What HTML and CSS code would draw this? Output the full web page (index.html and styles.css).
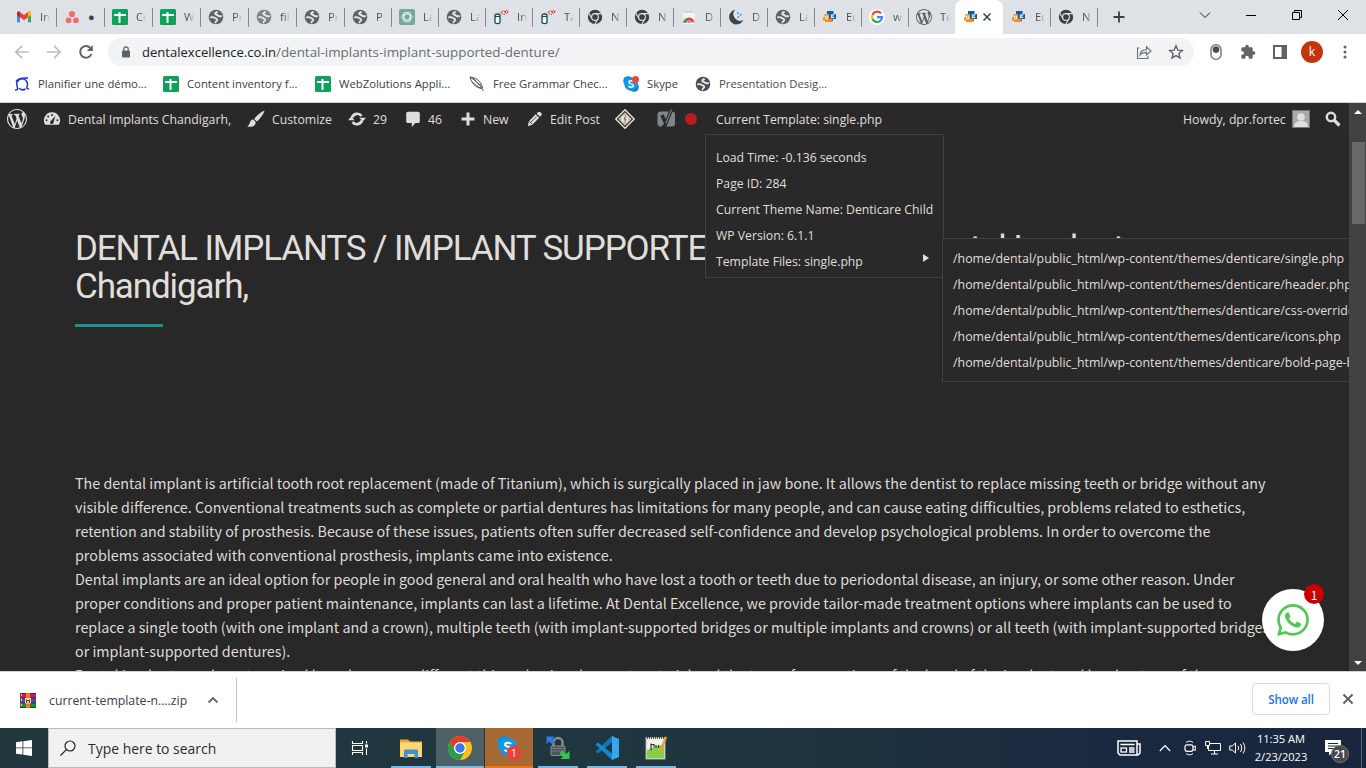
FILE: index.html
```html
<!DOCTYPE html>
<html lang="en">
<head>
<meta charset="utf-8">
<title>Dental Implants / Implant Supported Denture</title>
<link rel="stylesheet" href="styles.css">
</head>
<body>
<svg class="defs" width="0" height="0">
  <symbol id="globe" viewBox="0 0 16 16"><circle cx="8" cy="8" r="7.300" fill="currentColor"/><path d="M2.200 8.300c1.800-.3 3.600-.3 4.700.7 1 .8 2.400.6 2.400 1.900 0 1.200-1.700 1-1.800 2.400v1" fill="none" stroke="#e6e8eb" stroke-width="1.700"/><path d="M9.500 2.400c-.6 1-2.300.9-2.300 2.100 0 1.300 1.500 1 2.300 1.700.8.800 1.300 1.400 2.400 1.100.9-.2 1.500-.2 2 .2" fill="none" stroke="#e6e8eb" stroke-width="2"/></symbol>
  <symbol id="gmail" viewBox="0 0 16 16"><path d="M1 4.500v8.800h3V7.800z" fill="#4285f4"/><path d="M15 4.500v8.800h-3V7.800z" fill="#34a853"/><path d="M1 4.200C1 2.600 2.800 2 4 2.900l4 3 4-3c1.200-.9 3-.3 3 1.300L15 6l-7 5.200L1 6z" fill="#ea4335"/><path d="M12 2.900c1.200-.9 3-.3 3 1.300V6l-3 2.200z" fill="#fbbc04"/><path d="M1 4.200C1 2.900 2.500 2 4 2.900v5.300L1 6z" fill="#c5221f"/></symbol>
  <symbol id="asana" viewBox="0 0 16 16"><g fill="#f8696b"><circle cx="8" cy="5" r="3.100"/><circle cx="4.600" cy="11.300" r="2.900"/><circle cx="11.900" cy="11.300" r="2.900"/></g></symbol>
  <symbol id="sheet" viewBox="0 0 16 16"><rect width="16" height="16" rx="1.500" fill="#11a05b"/><path d="M2 6h12M7.500 3v11" stroke="#fff" stroke-width="2"/></symbol>
  <symbol id="gpt" viewBox="0 0 16 16"><rect width="16" height="16" rx="2" fill="#74a99a"/><g fill="none" stroke="#e5f2ee" stroke-width=".9"><ellipse cx="8" cy="8" rx="5.300" ry="3"/><ellipse cx="8" cy="8" rx="5.300" ry="3" transform="rotate(60 8 8)"/><ellipse cx="8" cy="8" rx="5.300" ry="3" transform="rotate(120 8 8)"/></g></symbol>
  <symbol id="db" viewBox="0 0 16 16"><path d="M2 6.500c0-1 1-1.500 2.500-1.500S7 5.500 7 6.500v6.800c0 .8-1 1.300-2.500 1.300S2 14.100 2 13.300z" fill="#fff" stroke="#114a5e" stroke-width="1.300"/><path d="M2 7.500h5" stroke="#114a5e" stroke-width="1.200"/><path d="M10 1.500 8 3.500l2 2M10.800 2.300h1.700v1.500h-1M11.500 5v.8M13.300 1.300l2 1.400-2 1.700" fill="none" stroke="#e02424" stroke-width="1"/></symbol>
  <symbol id="chromegray" viewBox="0 0 16 16"><circle cx="8" cy="8" r="7.200" fill="#3c4043"/><circle cx="8" cy="8" r="3.400" fill="none" stroke="#dee1e6" stroke-width="1.100"/><path d="M8 4.600h6.500M5 9.700 1.900 4.300M11 9.700l-3.200 5.500" stroke="#dee1e6" stroke-width="1.100"/></symbol>
  <symbol id="store" viewBox="0 0 16 16"><path d="M2 4h12v11H2z" fill="#f1f3f4"/><path d="M5.500 4V2.500h5V4" fill="none" stroke="#c4c7ca"/><path d="M2.500 14a5.500 5.500 0 0 1 11 0z" fill="#ea4335"/><path d="M2.500 12 4 9.800 7 14H2.500z" fill="#34a853"/><path d="M13.500 11.500V14H9z" fill="#fbbc04"/><path d="M5.700 14a2.300 2.300 0 0 1 4.600 0z" fill="#4285f4" stroke="#fff" stroke-width=".6"/></symbol>
  <symbol id="moon" viewBox="0 0 16 16"><path d="M7 .8a7.400 7.400 0 1 0 8.300 10.200A6.700 6.700 0 0 1 7 .8z" fill="#3f4448"/><g fill="#2da1f0"><circle cx="9.800" cy="4" r="1"/><circle cx="12.700" cy="5.800" r="1"/><circle cx="10.300" cy="8" r="1"/></g></symbol>
  <symbol id="de" viewBox="0 0 16 16"><path d="M5 2h6.500v3H14v5h-3v2H7V6H5z" fill="#0c5ea8"/><path d="M2.500 5H7v4.500h3.500V13H3v-1.500H1V8.500h1.500z" fill="#f58a1f"/><path d="M3.700 7h2v3h-2zM12.500 5.800H9.300v2.700h3M9.300 7h2.500" stroke="#fff" fill="none" stroke-width=".9"/></symbol>
  <symbol id="google" viewBox="0 0 16 16"><circle cx="8" cy="8" r="8" fill="#fff"/><g fill="none" stroke-width="2.200"><path d="M12 4.400A5 5 0 0 0 3.500 6" stroke="#ea4335"/><path d="M3.600 5.700a5 5 0 0 0 0 4.600" stroke="#fbbc05"/><path d="M3.500 10a5 5 0 0 0 7.800 1.800" stroke="#34a853"/><path d="M8 8.200h5a5 5 0 0 1-1.900 3.800" stroke="#4285f4"/></g></symbol>
  <symbol id="wp" viewBox="0 0 20 20"><path d="M20 10c0-5.510-4.490-10-10-10C4.480 0 0 4.490 0 10c0 5.520 4.480 10 10 10 5.510 0 10-4.480 10-10zM7.780 15.370L4.370 6.220c.55-.02 1.170-.08 1.170-.08.5-.06.44-1.130-.06-1.110 0 0-1.450.11-2.370.11-.18 0-.37 0-.58-.01C4.120 2.690 6.870 1.110 10 1.110c2.330 0 4.450.87 6.050 2.340-.68-.11-1.650.39-1.650 1.580 0 .74.45 1.360.9 2.100.35.61.55 1.360.55 2.460 0 1.490-1.400 5-1.400 5l-3.030-8.370c.54-.02.82-.17.82-.17.5-.05.44-1.250-.06-1.220 0 0-1.440.12-2.380.12-.87 0-2.330-.12-2.330-.12-.5-.03-.56 1.200-.06 1.220l.92.08 1.260 3.410zM17.410 10c.24-.64.74-1.870.43-4.250.7 1.290 1.050 2.710 1.050 4.250 0 3.290-1.730 6.240-4.400 7.780.97-2.590 1.940-5.200 2.920-7.780zM6.100 18.090C3.120 16.650 1.110 13.530 1.110 10c0-1.300.23-2.480.72-3.590C3.250 10.300 4.670 14.200 6.100 18.090zm4.030-6.630l2.580 6.980c-.86.29-1.760.45-2.710.45-.79 0-1.570-.11-2.290-.33.81-2.380 1.620-4.740 2.420-7.100z" fill="currentColor"/></symbol>
  <symbol id="skype" viewBox="0 0 16 16"><circle cx="5" cy="5" r="4.800" fill="#0a8fdc"/><circle cx="11" cy="11" r="4.800" fill="#0a7fd4"/><circle cx="8" cy="8" r="6.700" fill="#129ae2"/><path d="M10.300 5.800C9.500 4.500 5.900 4.400 5.900 6.300c0 2 4.500 1.200 4.500 3.300 0 2-3.800 2-4.800.4" fill="none" stroke="#fff" stroke-width="1.500"/></symbol>
</svg>

<header class="tabs">
  <div class="tab"><svg><use href="#gmail"/></svg><span>In</span></div>
  <div class="tab asana"><svg><use href="#asana"/></svg><span>●</span></div>
  <div class="tab"><svg><use href="#sheet"/></svg><span>Co</span></div>
  <div class="tab"><svg><use href="#sheet"/></svg><span>W</span></div>
  <div class="tab"><svg><use href="#globe"/></svg><span>Pr</span></div>
  <div class="tab faded"><svg><use href="#globe"/></svg><span>file</span></div>
  <div class="tab"><svg><use href="#globe"/></svg><span>Pr</span></div>
  <div class="tab n"><svg><use href="#globe"/></svg><span>P</span></div>
  <div class="tab n"><svg><use href="#gpt"/></svg><span>La</span></div>
  <div class="tab n"><svg><use href="#globe"/></svg><span>La</span></div>
  <div class="tab n"><svg><use href="#db"/></svg><span>In</span></div>
  <div class="tab n"><svg><use href="#db"/></svg><span>Ta</span></div>
  <div class="tab n"><svg><use href="#chromegray"/></svg><span>N</span></div>
  <div class="tab n"><svg><use href="#chromegray"/></svg><span>N</span></div>
  <div class="tab n"><svg><use href="#store"/></svg><span>D</span></div>
  <div class="tab n"><svg><use href="#moon"/></svg><span>D</span></div>
  <div class="tab n"><svg><use href="#globe"/></svg><span>La</span></div>
  <div class="tab n"><svg><use href="#de"/></svg><span>Ec</span></div>
  <div class="tab n"><svg><use href="#google"/></svg><span>w</span></div>
  <div class="tab n last"><svg><use href="#wp"/></svg><span>Te</span></div>
  <div class="tab active"><svg><use href="#de"/></svg><svg class="close" viewBox="0 0 10 10"><path d="M1.500 1.500l7 7M8.500 1.500l-7 7" stroke="#3c4043" stroke-width="1.500"/></svg></div>
  <div class="tab n"><svg><use href="#de"/></svg><span>Ec</span></div>
  <div class="tab n"><svg><use href="#chromegray"/></svg><span>N</span></div>
  <svg class="plus" viewBox="0 0 12 12"><path d="M6 .5v11M.5 6h11" stroke="#3c4043" stroke-width="1.800"/></svg>
  <div class="wincontrols">
    <svg viewBox="0 0 12 12"><path d="M1 3.500l5 5 5-5" fill="none" stroke="#222"/></svg>
    <svg viewBox="0 0 12 12"><path d="M1 6.500h10" stroke="#000"/></svg>
    <svg viewBox="0 0 12 12"><path d="M1.500 3.500h7v7h-7zM3.500 3V1.500h7v7H9" fill="none" stroke="#000"/></svg>
    <svg viewBox="0 0 12 12"><path d="M1 1l10 10M11 1L1 11" stroke="#000"/></svg>
  </div>
</header>

<nav class="toolbar">
  <div class="navbtns">
    <svg viewBox="0 0 16 16"><path d="M15 8H2M8 1.800 1.800 8 8 14.200" fill="none" stroke="#bcbec1" stroke-width="1.700"/></svg>
    <svg viewBox="0 0 16 16"><path d="M1 8h13M8 1.800 14.200 8 8 14.200" fill="none" stroke="#bcbec1" stroke-width="1.700"/></svg>
    <svg viewBox="0 0 16 16"><path d="M13.400 10A5.800 5.800 0 1 1 12.300 4" fill="none" stroke="#5f6368" stroke-width="2"/><path d="M14.800 1v6H8.800z" fill="#5f6368"/></svg>
  </div>
  <div class="omnibox">
    <svg class="lock" viewBox="0 0 10 12"><rect x="1" y="4.500" width="8" height="7" rx="1" fill="#5f6368"/><path d="M2.800 5V3a2.200 2.200 0 0 1 4.400 0v2" fill="none" stroke="#5f6368" stroke-width="1.200"/></svg>
    <span class="host">dentalexcellence.co.in</span><span class="path">/dental-implants-implant-supported-denture/</span>
    <svg class="share" viewBox="0 0 16 16"><path d="M3.500 4H1.500v10.500H12V12M4 11c.5-3.500 2.500-5.300 6.500-5.400V2.800L15 7l-4.500 4V8.400C7.500 8.400 5.600 9 4 11z" fill="none" stroke="#6d7175" stroke-width="1.100"/></svg>
    <svg class="star" viewBox="0 0 16 16"><path d="M8 1.800l1.800 4.300 4.600.4-3.500 3 1.100 4.500L8 11.600 4 14l1.100-4.500-3.500-3 4.600-.4z" fill="none" stroke="#5f6368" stroke-width="1.400"/></svg>
  </div>
  <div class="exts">
    <svg viewBox="0 0 16 16"><rect x="3" y=".6" width="10" height="14.800" rx="5" fill="#fff" stroke="#5a5e62" stroke-width="1.200"/><circle cx="8" cy="5.600" r="3.300" fill="#4a4d50"/></svg>
    <svg viewBox="0 0 24 24"><path d="M20.500 11H19V7c0-1.100-.9-2-2-2h-4V3.500a2.500 2.500 0 0 0-5 0V5H4c-1.100 0-2 .9-2 2v3.800h1.500a2.700 2.700 0 0 1 0 5.400H2V20c0 1.100.9 2 2 2h3.800v-1.500a2.700 2.700 0 0 1 5.400 0V22H17c1.100 0 2-.9 2-2v-4h1.500a2.500 2.500 0 0 0 0-5z" fill="#5f6368"/></svg>
    <svg viewBox="0 0 16 16"><path d="M1 1h14v14H1zM3 3v10h6.500V3z" fill="#5f6368" fill-rule="evenodd"/></svg>
    <span class="avatar">k</span>
    <svg viewBox="0 0 16 16"><g fill="#5f6368"><circle cx="8" cy="3" r="1.500"/><circle cx="8" cy="8" r="1.500"/><circle cx="8" cy="13" r="1.500"/></g></svg>
  </div>
</nav>

<nav class="bookmarks">
  <a><svg viewBox="0 0 16 16"><path d="M1 14c2.500.3 3-1 2.300-3A5.500 5.500 0 1 1 13 10.800c-.5 1.300 0 2.200 2 2.200M11.500 13A5.500 5.500 0 0 1 5 12.300M2 5.500c2-3 6-4 12-3.500" fill="none" stroke="#1c2be0" stroke-width="1.500"/></svg>Planifier une démo...</a>
  <a><svg><use href="#sheet"/></svg>Content inventory f...</a>
  <a><svg><use href="#sheet"/></svg>WebZolutions Appli...</a>
  <a><svg viewBox="0 0 16 16"><path d="M1 1c5 .5 11 3 12.500 11C9 13 3 9 1 1zM1 1c4 3 9 6 13.500 14M4 1.800c3 4 6 6 8.500 8M3 6c3 2 6 5 9 6.500" fill="none" stroke="#444" stroke-width=".9"/></svg>Free Grammar Chec...</a>
  <a><svg viewBox="0 0 16 16"><use href="#skype"/><circle cx="12.500" cy="3.500" r="3.500" fill="#f4433c"/></svg>Skype</a>
  <a class="dim"><svg><use href="#globe"/></svg>Presentation Desig...</a>
</nav>

<main class="viewport">
  <div class="page">
    <div class="adminbar">
      <span class="ab"><svg class="i20"><use href="#wp"/></svg></span>
      <span class="ab"><svg class="i18" viewBox="0 0 20 20"><path d="M10 2.500A9 9 0 0 0 2.600 16.500h14.800A9 9 0 0 0 10 2.500z" fill="currentColor"/><g fill="#292929"><circle cx="10" cy="5.500" r="1.100"/><circle cx="5.800" cy="7.300" r="1.100"/><circle cx="4" cy="11.300" r="1.100"/><circle cx="16" cy="11.300" r="1.100"/><path d="M13.800 6.500 11.700 13.500a1.900 1.900 0 1 1-2.700-1.500z"/></g></svg>Dental Implants Chandigarh,</span>
      <span class="ab"><svg class="i18" viewBox="0 0 20 20"><path d="M19.500.5c-4 1.500-9.500 6.500-11.500 9.500l2.800 2.800C14 10.500 18.500 4.500 19.500.5zM7 10.500c-2.300.2-3.300 1.500-3.800 3.500C2.800 16 1.700 17.300.3 18.300c3.500 1 9 .3 9.500-4.800z" fill="currentColor"/></svg>Customize</span>
      <span class="ab"><svg class="i18" viewBox="0 0 20 20"><path d="M4.500 8.300A6 6 0 0 1 15 6.600M15.500 11.700A6 6 0 0 1 5 13.400" fill="none" stroke="currentColor" stroke-width="3"/><path d="M12.500 8.500H20l-3.600 4.300zM0 11.500h7.300L3.600 7.200z" fill="currentColor"/></svg>29</span>
      <span class="ab"><svg class="i16" viewBox="0 0 20 20"><path d="M3.500 1h13c1 0 2 1 2 2v10c0 1-1 2-2 2h-3.500L8.500 20v-5h-5c-1 0-2-1-2-2V3c0-1 1-2 2-2z" fill="currentColor"/></svg>46</span>
      <span class="ab"><svg class="i16" viewBox="0 0 16 16"><path d="M8 1.500v13M1.500 8h13" stroke="currentColor" stroke-width="3"/></svg>New</span>
      <span class="ab"><svg class="i16" viewBox="0 0 20 20"><path d="M13.700 1.500c1.200-1.200 2.200-.8 3.500.5s1.800 2.400.6 3.600l-1.600 1.600-4.200-4.100zM10.900 4.200l4.300 4.300-8.500 8.600L1 19l1.400-6.200z" fill="currentColor"/><path d="M4.500 14.500 12 7M3 13l3.500 3.500" stroke="#292929" stroke-width="1"/></svg>Edit Post</span>
      <span class="ab"><svg class="i20" viewBox="0 0 20 20"><path d="M10 .8 19.200 10 10 19.200.8 10z" fill="#292929" stroke="currentColor" stroke-width="1.500"/><path d="M10 3.800 16.200 10 10 16.200 3.800 10z" fill="#c8ab83" stroke="#ded7ca"/><circle cx="10" cy="10" r="3.600" fill="#e8e6e2"/><path d="M10.800 7.200 9 10h2l-1.200 2.800" fill="none" stroke="#4c596b"/></svg></span>
      <span class="ab"><svg class="i20" viewBox="0 0 20 20"><rect x="1.500" y="2.500" width="17.500" height="15" rx="3" fill="#7f868a"/><path d="M6 6l3.500 8M15.500.5 9.800 14.500C9 17 8 18 6 18.500" fill="none" stroke="#292929" stroke-width="3.400"/><path d="M15.500.5 9.800 14.500" stroke="#8f9699" stroke-width="1"/></svg><i class="dot"></i></span>
      <span class="ab">Current Template: single.php</span>
      <span class="ab howdy">Howdy, dpr.fortec<svg class="i18" viewBox="0 0 18 18"><rect x=".5" y=".5" width="17" height="17" fill="#a9a9a9" stroke="#777"/><circle cx="9" cy="7" r="3.800" fill="#e2e0dd"/><path d="M2 17c0-5 3.500-6 7-6s7 1 7 6z" fill="#e2e0dd"/></svg></span>
      <span class="ab"><svg class="i16" viewBox="0 0 16 16"><circle cx="6" cy="6" r="4.200" fill="none" stroke="currentColor" stroke-width="2.400"/><path d="M9 9l5.500 5.500" stroke="currentColor" stroke-width="3.200"/></svg></span>
    </div>

    <h1 class="title">DENTAL IMPLANTS / IMPLANT SUPPORTED DENTURE <span class="tail">/ Dental Implants</span><br>Chandigarh,</h1>
    <div class="rule"></div>

    <div class="copy">
      <p>The dental implant is artificial tooth root replacement (made of Titanium), which is surgically placed in jaw bone. It allows the dentist to replace missing teeth or bridge without any<br>visible difference. Conventional treatments such as complete or partial dentures has limitations for many people, and can cause eating difficulties, problems related to esthetics,<br>retention and stability of prosthesis. Because of these issues, patients often suffer decreased self-confidence and develop psychological problems. In order to overcome the<br>problems associated with conventional prosthesis, implants came into existence.</p>
      <p>Dental implants are an ideal option for people in good general and oral health who have lost a tooth or teeth due to periodontal disease, an injury, or some other reason. Under<br>proper conditions and proper patient maintenance, implants can last a lifetime. At Dental Excellence, we provide tailor-made treatment options where implants can be used to<br>replace a single tooth (with one implant and a crown), multiple teeth (with implant-supported bridges or multiple implants and crowns) or all teeth (with implant-supported bridges<br>or implant-supported dentures).</p>
      <p>Dental implants can be categorized based on many different things, having the most material and the type of connections of the head of the implant and level or type of the</p>
    </div>

    <ul class="menu main">
      <li>Load Time: -0.136 seconds</li>
      <li>Page ID: 284</li>
      <li>Current Theme Name: Denticare Child</li>
      <li>WP Version: 6.1.1</li>
      <li class="more">Template Files: single.php</li>
    </ul>
    <ul class="menu flyout">
      <li>/home/dental/public_html/wp-content/themes/denticare/single.php</li>
      <li>/home/dental/public_html/wp-content/themes/denticare/header.php</li>
      <li>/home/dental/public_html/wp-content/themes/denticare/css-override.php</li>
      <li>/home/dental/public_html/wp-content/themes/denticare/icons.php</li>
      <li>/home/dental/public_html/wp-content/themes/denticare/bold-page-builder.php</li>
    </ul>

    <div class="whatsapp">
      <svg viewBox="0 0 24 24"><path d="M17.472 14.382c-.297-.149-1.758-.867-2.030-.967-.273-.099-.471-.148-.670.150-.197.297-.767.966-.940 1.164-.173.199-.347.223-.644.075-.297-.150-1.255-.463-2.390-1.475-.883-.788-1.480-1.761-1.653-2.059-.173-.297-.018-.458.130-.606.134-.133.298-.347.446-.520.149-.174.198-.298.298-.497.099-.198.050-.371-.025-.520-.075-.149-.669-1.612-.916-2.207-.242-.579-.487-.500-.669-.510-.173-.008-.371-.010-.570-.010-.198 0-.520.074-.792.372-.272.297-1.040 1.016-1.040 2.479 0 1.462 1.065 2.875 1.213 3.074.149.198 2.096 3.200 5.077 4.487.709.306 1.262.489 1.694.625.712.227 1.360.195 1.871.118.571-.085 1.758-.719 2.006-1.413.248-.694.248-1.289.173-1.413-.074-.124-.272-.198-.570-.347m-5.421 7.403h-.004a9.870 9.870 0 0 1-5.031-1.378l-.361-.214-3.741.982.998-3.648-.235-.374a9.860 9.860 0 0 1-1.510-5.260c.001-5.450 4.436-9.884 9.888-9.884 2.640 0 5.122 1.030 6.988 2.898a9.825 9.825 0 0 1 2.893 6.994c-.003 5.450-4.437 9.884-9.885 9.884m8.413-18.297A11.815 11.815 0 0 0 12.050 0C5.495 0 .160 5.335.157 11.892c0 2.096.547 4.142 1.588 5.945L.057 24l6.305-1.654a11.882 11.882 0 0 0 5.683 1.448h.005c6.554 0 11.890-5.335 11.893-11.893a11.821 11.821 0 0 0-3.480-8.413z" fill="#4dcb50"/></svg>
      <b class="count">1</b>
    </div>
  </div>
  <div class="scroll"><i class="up"></i><i class="thumb"></i><i class="down"></i></div>
</main>

<section class="shelf">
  <div class="item">
    <svg viewBox="0 0 16 15"><rect width="16" height="5" fill="#c8204f"/><rect y="5" width="16" height="5" fill="#4a4ab0"/><rect y="10" width="16" height="5" fill="#1d8f3c"/><path d="M1.500 0v15" stroke="#e8c75a" stroke-dasharray="3 2"/><path d="M0 5h16M0 10h16M0 .5h16M0 14.500h16" stroke="#222" stroke-width=".7"/><rect x="6" width="4" height="15" fill="#f07a1c"/><rect x="5" y="5" width="6" height="5.500" fill="#ecd9c8"/><path d="M6.500 10V6.500M9.500 10V6.500M6.500 7.500h3" fill="none" stroke="#b5202a"/></svg>
    <span>current-template-n....zip</span>
    <svg class="caret" viewBox="0 0 12 8"><path d="M1.500 6.500 6 2l4.500 4.500" fill="none" stroke="#5f6368" stroke-width="1.800"/></svg>
  </div>
  <div class="actions"><button>Show all</button><svg viewBox="0 0 12 12"><path d="M1.500 1.500l9 9M10.500 1.500l-9 9" stroke="#5f6368" stroke-width="2"/></svg></div>
</section>

<footer class="taskbar">
  <div class="start"><svg viewBox="0 0 16 16"><path d="M0 2.200 6.500 1.300v6.200H0zM7.300 1.200 16 0v7.500H7.300zM0 8.300h6.500v6.300L0 13.700zM7.300 8.300H16V16l-8.700-1.200z" fill="#fff"/></svg></div>
  <div class="search"><svg viewBox="0 0 16 16"><circle cx="10" cy="6" r="5" fill="none" stroke="#222" stroke-width="1.200"/><path d="M6.300 9.700.5 15.500" stroke="#222" stroke-width="1.200"/></svg>Type here to search</div>
  <div class="app tv"><svg class="tvicon" viewBox="0 0 18 16"><path d="M1.500 1v2.500h10V1M1.500 15v-2.500h10V15M1.500 5.500h10v5h-10zM15.500 1v2.500M15.500 8.500V15" fill="none" stroke="#fff" stroke-width="1.100"/><rect x="14" y="4.500" width="3" height="3" fill="#fff"/></svg></div>
  <div class="app run"><svg viewBox="0 0 24 24"><path d="M1 3.500h8l2 2h12V21H1z" fill="#e9a93a"/><rect x="1" y="6.500" width="22" height="14.500" fill="#fcd670"/><path d="M5 22v-7c0-1 1-1.500 2-1.500h10c1 0 2 .5 2 1.500v7h-3.500v-4h-7v4z" fill="#3f8fd6"/></svg></div>
  <div class="app run chrome"><svg viewBox="0 0 24 24"><circle cx="12" cy="12" r="12" fill="#fbc116"/><path d="M12 6h10.400A12 12 0 0 0 1.600 6l5.200 9z" fill="#e33b2e"/><path d="M1.600 6A12 12 0 0 0 12 24l5.200-9L12 18l-5.200-3z" fill="#269f4b"/><circle cx="12" cy="12" r="6" fill="#fff"/><circle cx="12" cy="12" r="4.700" fill="#3b78e7"/></svg></div>
  <div class="app run skypeapp"><svg viewBox="0 0 24 24"><use href="#skype" width="22" height="22"/><circle cx="17" cy="17" r="7.500" fill="#ef3f3a"/><text x="17" y="21" text-anchor="middle" class="skcount">1</text></svg></div>
  <div class="app run"><svg viewBox="0 0 24 24"><path d="M7.500 11V6.500a4.500 4.500 0 0 1 9 0V11" fill="none" stroke="#858b90" stroke-width="2.500"/><rect x="5" y="10" width="14" height="9.500" rx="1" fill="#4d5257" stroke="#8b9297"/><path d="M5.500 12.500h13M5.500 15h13" stroke="#777d82"/><path d="M.5.500h8L6.300 3 9 6 6.500 8.500 3.500 5.500.5 8z" fill="#2c7be8"/><path d="M23.500 23h-9l2.500-2.500-3.500-3 2.500-3 4 3.500 3.500-3z" fill="#35c748"/></svg></div>
  <div class="app run"><svg viewBox="0 0 24 24"><path d="M17 0v6.500L3 17.500.5 15.500z" fill="#1375bb"/><path d="M17 24v-6.500L3 6.500.5 8.500z" fill="#1588d4"/><path d="M17 0 24 3v18l-7 3z" fill="#37a6ee"/></svg></div>
  <div class="app run"><svg viewBox="0 0 24 24"><rect x="2" y="1.500" width="19" height="21.500" fill="#f2f2ea" stroke="#aaa"/><path d="M3 14 20 8v14H3z" fill="#83cf4a"/><path d="M3 2h17" stroke="#555" stroke-dasharray="1 1" stroke-width="2"/><path d="M7 7.500v7M7 8.500h3v3M12 9v3M14.500 9v3" stroke="#263b1e" fill="none" stroke-width="1.200"/><path d="M22 1 15.500 17" stroke="#e7a13b" stroke-width="2.300"/></svg></div>
  <div class="tray">
    <svg class="news" viewBox="0 0 24 16"><path d="M1 1h19v14H3l-2-2zM20 4h3v9l-2 2h-3" fill="none" stroke="#fff" stroke-width="1.500"/><path d="M3.500 4.500h14M12 8h5.500M12 10h5.500M12 12h5.500" stroke="#fff" stroke-width="1.300"/><rect x="4" y="8" width="5.500" height="4" fill="none" stroke="#fff" stroke-width="1.300"/></svg>
    <svg class="up" viewBox="0 0 12 8"><path d="M.8 7 6 1.500 11.200 7" fill="none" stroke="#fff" stroke-width="1.200"/></svg>
    <svg class="cam" viewBox="0 0 12 16"><path d="M2 2.500C4 .7 7 .7 9 2.500M2 13.500c2 1.800 5 1.800 7 0M9 7l2.300-1v4.500L9 9.500" fill="none" stroke="#fff"/><rect x="1" y="4.800" width="8" height="6.500" rx="2" fill="none" stroke="#fff" stroke-width="1.200"/></svg>
    <svg class="net" viewBox="0 0 16 14"><path d="M5 2.500h10.500v7H3.500V5M9.500 9.500V13M6 13h7M.5.500h4v4h-4zM2.500 4.500V8" fill="none" stroke="#fff"/></svg>
    <svg class="vol" viewBox="0 0 17 14"><path d="M.7 5h2.500L6.500 2v10L3.200 9H.7zM9 4.800c.8 1.300.8 3.100 0 4.400M11.500 3c1.600 2.500 1.600 5.500 0 8M14 1.500c2.400 3.500 2.400 7.500 0 11" fill="none" stroke="#fff"/></svg>
    <div class="clock"><span>11:35 AM</span><span>2/23/2023</span></div>
    <div class="notes"><svg viewBox="0 0 16 16"><path d="M0 0h16v12H8l-4 3.500V12H0z" fill="#fff"/><path d="M3 3.500h10M3 6h10M3 8.500h10" stroke="#1b2a40" stroke-width="1.200"/></svg><b>21</b></div>
    <i class="peek"></i>
  </div>
</footer>
</body>
</html>
```
FILE: styles.css
```css
* { box-sizing: border-box; }
body { margin: 0; width: 1366px; height: 768px; overflow: hidden; display: flex; flex-direction: column; font-family: "Open Sans", sans-serif; background: #fff; }
svg { display: block; flex: none; }
.defs { position: absolute; }

/* tab strip */
.tabs { height: 34px; background: #dee1e6; display: flex; align-items: center; flex: none; padding-left: 8px; }
.tab { width: 48px; height: 34px; display: flex; align-items: center; padding-left: 8px; color: #5f6368; position: relative; flex: none; font-size: 11.300px; }
.tab.n { width: 47px; }
.tab svg { width: 16px; height: 16px; }
.tab span { margin-left: 8px; width: 10px; overflow: hidden; white-space: nowrap; color: #4d5156; line-height: 20px; -webkit-mask-image: linear-gradient(90deg, #000 40%, transparent); }
.tab::after { content: ""; position: absolute; right: -1px; top: 8px; width: 1px; height: 19px; background: #85888c; }
.tab.asana span { -webkit-mask-image: none; font-size: 11px; color: #3c4043; margin-left: 8px; line-height: 16px; }
.tab.faded svg { opacity: .75; }
.tab.last::after, .tab.active::after { display: none; }
.tab.active { background: #fff; border-radius: 8px 8px 0 0; }
.tab svg.close { width: 10px; height: 10px; margin-left: 3px; }
.plus { width: 12px; height: 12px; margin-left: 16px; }
.wincontrols { margin-left: auto; display: flex; gap: 34px; padding: 0 17px 5px 0; }
.wincontrols svg { width: 12px; height: 12px; }

/* toolbar */
.toolbar { height: 36px; flex: none; display: flex; align-items: center; padding-left: 14px; }
.navbtns { display: flex; gap: 16px; width: 94px; flex: none; }
.navbtns svg { width: 16px; height: 16px; }
.omnibox { width: 1086px; flex: none; height: 28px; border-radius: 14px; background: #f1f3f4; display: flex; align-items: center; padding: 0 10px 0 13px; white-space: nowrap; }
.lock { width: 10px; height: 12px; margin-right: 11px; }
.host { font-size: 13.050px; color: #202124; }
.path { font-size: 13.420px; color: #6a6e73; }
.share { width: 16px; height: 16px; margin-left: auto; }
.star { width: 16px; height: 16px; margin-left: 16px; }
.exts { display: flex; align-items: center; padding-left: 14px; }
.exts svg { width: 16px; height: 16px; margin-right: 16px; }
.exts svg:last-child { margin-right: 0; }
.avatar { width: 22px; height: 22px; margin: 0 14px 0 -3px; border-radius: 50%; background: #c3360d; color: #fff; font-size: 12.500px; line-height: 21px; text-align: center; }

/* bookmarks */
.bookmarks { height: 33px; flex: none; display: grid; grid-template-columns: 149px 152px 154px 154px 72px 1fr; padding: 0 0 5px 14px; border-bottom: 1px solid #cfd1d4; font-size: 11.300px; color: #3c4043; }
.bookmarks a { display: flex; align-items: center; gap: 8px; white-space: nowrap; }
.bookmarks svg { width: 16px; height: 16px; }
.bookmarks .dim { color: #4a4d51; }

/* viewport */
.viewport { height: 568px; flex: none; display: flex; }
.page { width: 1349px; height: 568px; position: relative; overflow: hidden; background: #282828; color: #e0dedb; }
.adminbar { height: 32px; background: #292929; display: grid; grid-template-columns: 43px 204px 101px 57px 55px 67px 88px 41px 60px 1fr 142px 24px; font-size: 12.250px; }
.ab { display: flex; align-items: center; gap: 7px; white-space: nowrap; }
.ab:first-child { padding-left: 7px; }
.i20 { width: 20px; height: 20px; }
.i18 { width: 18px; height: 18px; }
.i16 { width: 16px; height: 16px; }
.dot { width: 12px; height: 12px; border-radius: 50%; background: #b81c1c; margin-left: 2px; }
.howdy { gap: 6px; }
.title { margin: 95px 0 0 75px; font: 400 35px/38px Roboto, sans-serif; letter-spacing: -1.120px; white-space: nowrap; }
.tail { margin-left: 4px; }
.rule { width: 88px; height: 3px; background: #1c9490; margin: 18px 0 0 75px; }
.copy { margin: 144px 0 0 75px; font: 400 14.325px/24px "Noto Sans CJK SC", sans-serif; white-space: nowrap; color: #dedbd7; }
.copy p { margin: 0; }

.menu { position: absolute; margin: 0; list-style: none; background: #292929; border: 1px solid #404040; line-height: 26px; white-space: nowrap; }
.menu.main { left: 705px; top: 31px; width: 239px; height: 144px; padding: 10px; font-size: 12.220px; }
.menu.flyout { left: 942px; top: 135px; width: 430px; height: 144px; padding: 7px 10px; font-size: 12.380px; }
.more::after { content: ""; position: absolute; right: 14px; top: 119px; border: 4px solid transparent; border-left: 6px solid #e0dedb; border-right: 0; }

.whatsapp { position: absolute; left: 1262px; top: 486px; width: 62px; height: 62px; border-radius: 50%; background: #fff; display: flex; align-items: center; justify-content: center; }
.whatsapp svg { width: 32px; height: 32px; }
.count { position: absolute; right: 0; top: -5px; width: 20px; height: 20px; border-radius: 50%; background: #c00; color: #fff; font: 400 12px/22px "Noto Sans CJK SC", sans-serif; text-align: center; }

.scroll { width: 17px; background: #424242; display: flex; flex-direction: column; align-items: center; padding: 7px 0 6px 1px; }
.scroll .up { border: 4px solid transparent; border-bottom-color: #fff; border-top: 0; }
.scroll .thumb { width: 13px; height: 82px; margin-top: 28px; background: #686868; }
.scroll .down { margin-top: auto; border: 4px solid transparent; border-top-color: #fff; border-bottom: 0; }

/* download shelf */
.shelf { height: 57px; flex: none; display: flex; justify-content: space-between; border-top: 1px solid #d4d0d0; background: #fff; }
.item { display: flex; align-items: center; width: 237px; height: 44px; margin-top: 6px; border-right: 1px solid #c6c6c6; padding-left: 20px; font-size: 12.270px; color: #3c4043; }
.item > svg:first-child { width: 16px; height: 15px; margin-right: 13px; }
.item .caret { width: 12px; height: 8px; margin-left: 20px; }
.actions { display: flex; align-items: center; padding-right: 12px; gap: 12px; padding-bottom: 2px; }
.actions button { width: 78px; height: 32px; padding: 0; border: 1px solid #dadce0; border-radius: 4px; background: #fff; color: #1a73e8; font: 600 11.600px "Open Sans", sans-serif; letter-spacing: -.1px; }
.actions svg { width: 12px; height: 12px; }

/* taskbar */
.taskbar { height: 40px; flex: none; display: flex; background: linear-gradient(90deg, #22383f 0, #20363f 55%, #1a2940 80%, #19263d 100%); color: #fff; }
.start { width: 48px; display: flex; align-items: center; justify-content: center; }
.start svg { width: 16px; height: 16px; }
.search { width: 288px; background: #f1f1f1; border: 1px solid #bcbcbc; color: #2d2d2d; font-size: 13.950px; display: flex; align-items: center; padding-left: 11px; gap: 12px; }
.search svg { width: 16px; height: 16px; }
.app { width: 48px; margin-right: 1px; display: flex; align-items: center; justify-content: center; background-repeat: no-repeat; }
.app svg { width: 24px; height: 24px; }
.app .tvicon { width: 18px; height: 16px; }
.tv { margin-right: 3px; }
.run { background-image: linear-gradient(#76b9ed, #76b9ed); background-size: 40px 2px; background-position: 50% 100%; }
.chrome { background-color: #4d6067; background-size: 48px 2px; }
.skypeapp { background-color: #a86a35; background-image: linear-gradient(#ff7400, #ff7400); background-size: 48px 2px; }
.skcount { font: 11px "Open Sans", sans-serif; fill: #fff; }
.tray { margin-left: auto; display: flex; align-items: center; }
.news { width: 24px; height: 16px; margin-right: 18px; }
.tray .up { width: 12px; height: 8px; margin-right: 13px; }
.cam { width: 12px; height: 16px; margin-right: 9px; }
.net { width: 16px; height: 14px; margin-right: 8px; }
.vol { width: 17px; height: 14px; margin-right: 8px; }
.clock { display: flex; flex-direction: column; align-items: center; width: 54px; font-size: 11.100px; line-height: 18px; padding-bottom: 1px; }
.notes { position: relative; margin-left: 17px; width: 27px; }
.notes svg { width: 16px; height: 16px; }
.notes b { position: absolute; left: 6px; top: 5px; width: 18px; height: 18px; border-radius: 50%; background: #45484d; border: 1px solid #777; font: 600 10.500px/16px "Open Sans", sans-serif; text-align: center; }
.peek { width: 1px; height: 40px; background: #5c6879; margin: 0 4px 0 9px; }
```
